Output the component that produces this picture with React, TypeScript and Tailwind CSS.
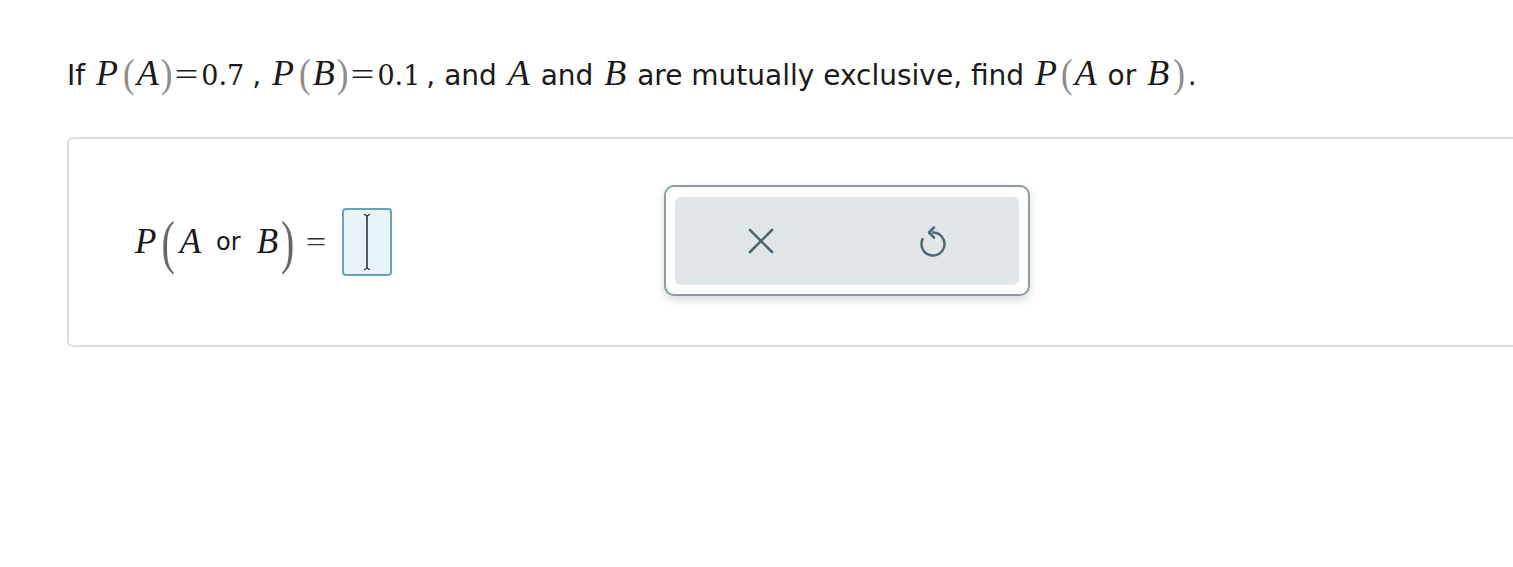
import React from "react";

const serif = { fontFamily: '"Liberation Serif", "Times New Roman", serif' };
const digitFont = { fontFamily: '"DejaVu Serif", "Liberation Serif", serif' };

const Paren = ({ ch, big }: { ch: string; big?: boolean }) => (
  <span
    className={
      big
        ? "inline-block text-[40px] leading-none text-[#666] scale-y-[1.5]"
        : "inline-block text-[35px] leading-none text-[#8c8c8c] scale-y-[1.15]"
    }
    style={serif}
  >
    {ch}
  </span>
);

const V = ({ children, sm }: { children: React.ReactNode; sm?: boolean }) => (
  <span className={sm ? "px-[2px] italic text-[35px]" : "px-[2px] italic text-[36px]"} style={serif}>
    {children}
  </span>
);

const N = ({ children }: { children: React.ReactNode }) => (
  <span className="text-[27px]" style={digitFont}>
    {children}
  </span>
);

const Eq = () => (
  <span className="mx-[3px] inline-block w-[23px] scale-x-[1.35] text-center text-[31px]" style={serif}>
    =
  </span>
);

export default function App() {
  return (
    <div
      className="min-h-[567px] w-full overflow-hidden bg-white pl-[67px] pt-[51px] text-[#1a1a1a]"
      style={{ fontFamily: '"DejaVu Sans", Verdana, sans-serif' }}
    >
      {/* question */}
      <p className="flex h-[48px] items-baseline whitespace-pre text-[28px] leading-[44px]">
        <span>If </span>
        <V>P</V>
        <span className="ml-[3px]" />
        <Paren ch="(" />
        <V>A</V>
        <Paren ch=")" />
        <Eq />
        <N>0.7</N>
        <span className="ml-[8px]">, </span>
        <V>P</V>
        <span className="ml-[3px]" />
        <Paren ch="(" />
        <V>B</V>
        <Paren ch=")" />
        <Eq />
        <N>0.1</N>
        <span className="ml-[6px]">, and </span>
        <V>A</V>
        <span> and </span>
        <V>B</V>
        <span> are mutually exclusive, find </span>
        <V>P</V>
        <span className="ml-[2px]" />
        <Paren ch="(" />
        <V>A</V>
        <span> or </span>
        <V>B</V>
        <span className="ml-[2px]" />
        <Paren ch=")" />
        <span className="ml-[3px]">.</span>
      </p>

      {/* answer panel */}
      <div className="mt-[38px] flex h-[210px] w-[1500px] items-center rounded-l-[6px] border-2 border-r-0 border-[#dadddf] pl-[64px]">
        <div className="flex w-[261px] items-center whitespace-pre">
          <V sm>P</V>
          <span className="ml-[3px]">
            <Paren ch="(" big />
          </span>
          <span className="ml-[3px]">
            <V sm>A</V>
          </span>
          <span className="ml-[13px] text-[24px]">or</span>
          <span className="ml-[14px]">
            <V sm>B</V>
          </span>
          <span className="ml-[1px]">
            <Paren ch=")" big />
          </span>
          <span className="ml-[14px] inline-block scale-x-[1.3] text-[28px] text-[#333]" style={serif}>
            =
          </span>
          <div className="ml-[18px] flex h-[68px] w-[50px] items-center justify-center rounded-[4px] border-2 border-[#6aa3b5] bg-[#e9f4f8]">
            <svg width="12" height="60" viewBox="0 0 12 60">
              <path d="M3 2 L6 4 L9 2" fill="none" stroke="#333" strokeWidth="1.2" />
              <path d="M6 4 V56" stroke="#333" strokeWidth="1.6" />
              <path d="M3 58 L6 56 L9 58" fill="none" stroke="#333" strokeWidth="1.2" />
            </svg>
          </div>
        </div>

        {/* keypad */}
        <div className="ml-[270px] mt-[-3px] rounded-[10px] border-2 border-[#8b9da6] bg-white px-[9px] pb-[9px] pt-[10px] shadow-[0_4px_10px_rgba(0,0,0,0.15)]">
          <div className="flex h-[88px] w-[344px] items-center justify-around rounded-[6px] bg-[#e1e6e9]">
            <svg width="26" height="26" viewBox="0 0 26 26">
              <path d="M2 2 L24 24 M24 2 L2 24" stroke="#4c6a76" strokeWidth="2.6" strokeLinecap="round" />
            </svg>
            <svg width="28" height="34" viewBox="0 0 28 34">
              <path
                d="M14 8.5 A11.5 11.5 0 1 1 3.6 15.1"
                fill="none"
                stroke="#4c6a76"
                strokeWidth="2.5"
                strokeLinecap="round"
              />
              <path d="M15 3.5 L10 8.5 L15 13.5" fill="none" stroke="#4c6a76" strokeWidth="2.5" strokeLinecap="round" strokeLinejoin="round" />
            </svg>
          </div>
        </div>
      </div>
    </div>
  );
}
